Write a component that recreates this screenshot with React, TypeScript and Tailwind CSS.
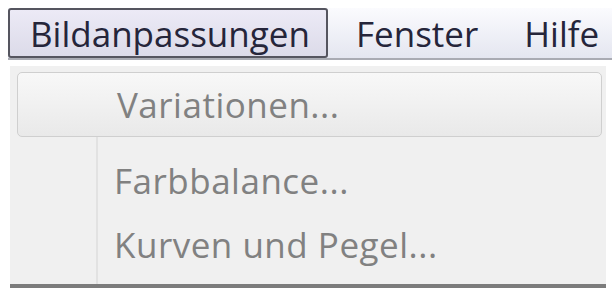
import React from 'react';

const font = { fontFamily: '"Open Sans", "Noto Sans", sans-serif' };

export default function App() {
  return (
    <div className="w-[612px] h-[290px] bg-white overflow-hidden" style={font}>
      {/* menu bar */}
      <div className="ml-[8px] mt-[8px] h-[52px] flex items-center bg-gradient-to-b from-[#fbfbfe] to-[#e4e6f0] border-b-[2px] border-[#a9abb3] text-[#25253a] text-[35px] leading-none">
        <div className="h-[50px] w-[320px] flex items-center pl-[20px] bg-gradient-to-b from-[#eceaf6] to-[#dcdbe9] border-[2px] border-[#55555f] rounded-[3px]">
          Bildanpassungen
        </div>
        <div className="ml-[28px]">Fenster</div>
        <div className="ml-[46px]">Hilfe</div>
      </div>

      {/* dropdown */}
      <div className="ml-[10px] mt-[6px] w-[596px] h-[222px] bg-[#f0f0f0] border-b-[4px] border-[#7c7c7c] pt-[6px] pl-[7px] pr-[4px] flex flex-col text-[35px] tracking-[0.5px] leading-none text-[#818181]">
        <div className="h-[65px] flex items-center pl-[99px] rounded-[5px] border border-[#cfcfcf] bg-gradient-to-b from-[#f8f8f8] to-[#e9e9e9]">
          Variationen...
        </div>
        <div className="flex flex-1">
          <div className="w-[81px] border-r-[2px] border-[#e2e2e2]" />
          <div className="flex-1 flex flex-col pl-[16px]">
            <div className="h-[80px] flex items-center pt-[6px]">Farbbalance...</div>
            <div className="flex-1 flex items-center pb-[12px]">Kurven und Pegel...</div>
          </div>
        </div>
      </div>
    </div>
  );
}
